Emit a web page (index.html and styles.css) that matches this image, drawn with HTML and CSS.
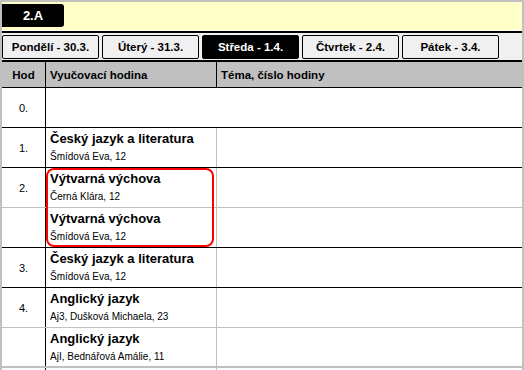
FILE: index.html
```html
<!DOCTYPE html>
<html lang="cs">

<head>
    <meta charset="UTF-8">
    <title>Rozvrh - 2.A</title>
    <link rel="stylesheet" href="styles.css">
</head>

<body>
    <div class="schedule-frame">
        <div class="class-bar">
            <span class="class-badge">2.A</span>
        </div>

        <div class="day-tabs">
            <button type="button" class="day-tab">Pondělí - 30.3.</button>
            <button type="button" class="day-tab">Úterý - 31.3.</button>
            <button type="button" class="day-tab active">Středa - 1.4.</button>
            <button type="button" class="day-tab">Čtvrtek - 2.4.</button>
            <button type="button" class="day-tab">Pátek - 3.4.</button>
        </div>

        <div class="timetable">
            <div class="tt-row tt-head">
                <div class="hour-cell">Hod</div>
                <div class="lesson-cell">Vyučovací hodina</div>
                <div class="topic-cell">Téma, číslo hodiny</div>
            </div>

            <div class="tt-row end">
                <div class="hour-cell">0.</div>
                <div class="lesson-cell wide"></div>
            </div>

            <div class="tt-row end">
                <div class="hour-cell">1.</div>
                <div class="lesson-cell">
                    <div class="subject">Český jazyk a literatura</div>
                    <div class="teacher">Šmídová Eva, 12</div>
                </div>
                <div class="topic-cell"></div>
            </div>

            <div class="tt-group">
                <div class="tt-row">
                    <div class="hour-cell">2.</div>
                    <div class="lesson-cell">
                        <div class="subject">Výtvarná výchova</div>
                        <div class="teacher">Černá Klára, 12</div>
                    </div>
                    <div class="topic-cell"></div>
                </div>
                <div class="tt-row end">
                    <div class="hour-cell"></div>
                    <div class="lesson-cell">
                        <div class="subject">Výtvarná výchova</div>
                        <div class="teacher">Šmídová Eva, 12</div>
                    </div>
                    <div class="topic-cell"></div>
                </div>
                <div class="change-mark"></div>
            </div>

            <div class="tt-row end">
                <div class="hour-cell">3.</div>
                <div class="lesson-cell">
                    <div class="subject">Český jazyk a literatura</div>
                    <div class="teacher">Šmídová Eva, 12</div>
                </div>
                <div class="topic-cell"></div>
            </div>

            <div class="tt-row">
                <div class="hour-cell">4.</div>
                <div class="lesson-cell">
                    <div class="subject">Anglický jazyk</div>
                    <div class="teacher">Aj3, Dušková Michaela, 23</div>
                </div>
                <div class="topic-cell"></div>
            </div>
            <div class="tt-row last">
                <div class="hour-cell"></div>
                <div class="lesson-cell">
                    <div class="subject">Anglický jazyk</div>
                    <div class="teacher">AjI, Bednářová Amálie, 11</div>
                </div>
                <div class="topic-cell"></div>
            </div>

            <div class="tt-row">
                <div class="hour-cell"></div>
                <div class="lesson-cell"></div>
                <div class="topic-cell"></div>
            </div>
        </div>
    </div>
</body>

</html>
```

FILE: styles.css
```css
:root {
    --frame-color: #c0c0c0;
    --head-bg: #c0c0c0;
    --bar-yellow: #ffffc8;
    --tab-bg: #f0f0f0;
    --grid-line: #c0c0c0;
    --mark-color: #ff0000;
    --text-color: #000000;
}

body {
    margin: 0;
    font-family: "Liberation Sans", Arial, sans-serif;
    color: var(--text-color);
    background: #ffffff;
    overflow: hidden;
}

.schedule-frame {
    width: 524px;
    height: 370px;
    box-sizing: border-box;
    border: 2px solid var(--frame-color);
    border-bottom: none;
    overflow: hidden;
}

/* class bar */

.class-bar {
    background: var(--bar-yellow);
    padding: 2px 0 3px;
    border-bottom: 1px solid #ffffff;
}

.class-badge {
    display: flex;
    align-items: center;
    justify-content: center;
    width: 62px;
    height: 23px;
    background: #000000;
    color: #ffffff;
    font-size: 13px;
    font-weight: bold;
    border-radius: 0 3px 3px 0;
}

/* day tabs */

.day-tabs {
    display: flex;
    gap: 3px;
    padding: 2px 0 1px;
    background: var(--tab-bg);
    border-top: 2px solid #000000;
    border-bottom: 2px solid #000000;
}

.day-tab {
    width: 97px;
    height: 24px;
    box-sizing: border-box;
    padding: 0;
    border: 1px solid #000000;
    border-radius: 2px;
    background: var(--tab-bg);
    color: var(--text-color);
    font-family: "Liberation Sans", Arial, sans-serif;
    font-size: 11.5px;
    font-weight: bold;
    cursor: pointer;
}

.day-tab.active {
    background: #000000;
    color: #ffffff;
}

/* timetable */

.tt-row {
    display: grid;
    grid-template-columns: 44px 171px 1fr;
    height: 40px;
    box-sizing: border-box;
    border-bottom: 1px solid var(--grid-line);
}

.tt-row.end {
    border-bottom-color: #000000;
}

.tt-row.last {
    border-bottom-width: 2px;
}

.hour-cell {
    display: flex;
    align-items: center;
    justify-content: center;
    border-right: 1px solid #000000;
    font-size: 11px;
}

.lesson-cell {
    padding: 3px 4px 0;
    border-right: 1px solid var(--grid-line);
}

.lesson-cell.wide {
    grid-column: span 2;
    border-right: none;
}

.subject {
    font-size: 13px;
    font-weight: bold;
    line-height: 16px;
    white-space: nowrap;
}

.teacher {
    margin-top: 3px;
    font-size: 10px;
    line-height: 14px;
    white-space: nowrap;
}

.tt-head {
    height: 26px;
    background: var(--head-bg);
    border-bottom-color: #000000;
    font-size: 11.5px;
    font-weight: bold;
}

.tt-head .hour-cell {
    font-size: 11.5px;
}

.tt-head .lesson-cell,
.tt-head .topic-cell {
    display: flex;
    align-items: center;
    padding: 0 4px;
}

.tt-head .lesson-cell {
    border-right-color: #000000;
}

/* changed lessons */

.tt-group {
    position: relative;
}

.change-mark {
    position: absolute;
    top: 0;
    left: 44px;
    width: 168px;
    height: 79px;
    box-sizing: border-box;
    border: 2px solid var(--mark-color);
    border-radius: 8px;
    pointer-events: none;
}
```
